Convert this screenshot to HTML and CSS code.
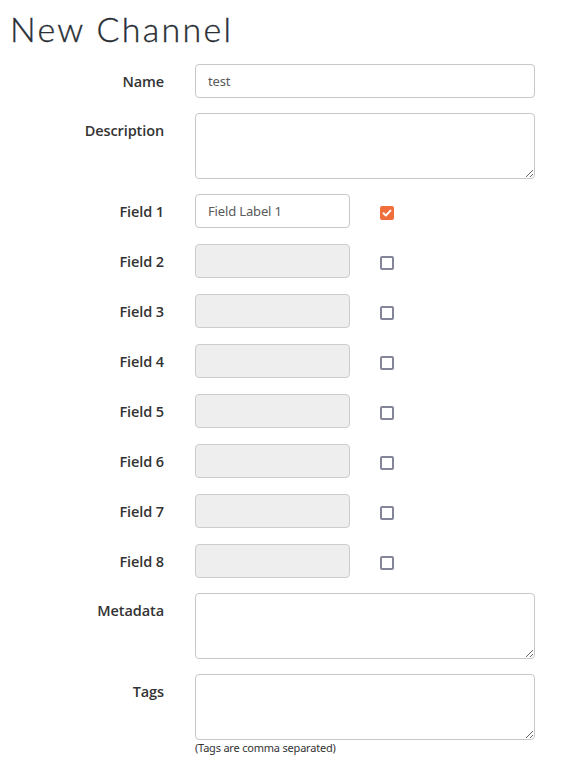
FILE: index.html
```html
<!DOCTYPE html>
<html>
<head>
<meta charset="utf-8">
<link rel="stylesheet" href="styles.css">
</head>
<body>
<div class="page">
  <h1 class="title">New Channel</h1>
  <form class="form">
    <div class="row">
      <label class="label">Name</label>
      <div class="control"><input class="input wide" type="text" value="test"></div>
    </div>
    <div class="row">
      <label class="label top">Description</label>
      <div class="control"><textarea class="area"></textarea></div>
    </div>
    <div class="fields">
      <div class="row">
        <label class="label">Field 1</label>
        <div class="control field"><input class="input narrow" type="text" value="Field Label 1"><span class="check on"><svg viewBox="0 0 14 14" width="14" height="14"><path d="M3.5 7.2 L5.9 9.5 L10.5 4.6" fill="none" stroke="#fff" stroke-width="1.9" stroke-linecap="round" stroke-linejoin="round"/></svg></span></div>
      </div>
      <div class="row">
        <label class="label">Field 2</label>
        <div class="control field"><input class="input narrow off" type="text" disabled><span class="check"></span></div>
      </div>
      <div class="row">
        <label class="label">Field 3</label>
        <div class="control field"><input class="input narrow off" type="text" disabled><span class="check"></span></div>
      </div>
      <div class="row">
        <label class="label">Field 4</label>
        <div class="control field"><input class="input narrow off" type="text" disabled><span class="check"></span></div>
      </div>
      <div class="row">
        <label class="label">Field 5</label>
        <div class="control field"><input class="input narrow off" type="text" disabled><span class="check"></span></div>
      </div>
      <div class="row">
        <label class="label">Field 6</label>
        <div class="control field"><input class="input narrow off" type="text" disabled><span class="check"></span></div>
      </div>
      <div class="row">
        <label class="label">Field 7</label>
        <div class="control field"><input class="input narrow off" type="text" disabled><span class="check"></span></div>
      </div>
      <div class="row">
        <label class="label">Field 8</label>
        <div class="control field"><input class="input narrow off" type="text" disabled><span class="check"></span></div>
      </div>
    </div>
    <div class="row">
      <label class="label top">Metadata</label>
      <div class="control"><textarea class="area"></textarea></div>
    </div>
    <div class="row">
      <label class="label top tags">Tags</label>
      <div class="control">
        <textarea class="area"></textarea>
        <div class="help">(Tags are comma separated)</div>
      </div>
    </div>
  </form>
</div>
</body>
</html>
```

FILE: styles.css
```css
* { box-sizing: border-box; }
html, body { margin: 0; padding: 0; background: #fff; }
body { font-family: "Open Sans", "Noto Sans", sans-serif; color: #333; }
.page { padding: 0 10px; }
.title {
  font-family: Lato, "Open Sans", sans-serif;
  font-weight: 300;
  font-size: 34px;
  line-height: 40px;
  letter-spacing: 2.3px;
  color: #2a2f36;
  margin: 9px 0 15px 0;
  height: 40px;
  -webkit-text-stroke: 0.35px #2a2f36;
}
.form { display: flex; flex-direction: column; gap: 15px; }
.fields { display: flex; flex-direction: column; gap: 16px; }
.row { display: grid; grid-template-columns: 155px 340px; column-gap: 30px; align-items: center; }
.row:has(.area) { align-items: start; }
.label {
  text-align: right;
  font-family: "Open Sans", sans-serif;
  font-weight: 600;
  font-size: 14.5px;
  letter-spacing: -0.1px;
  color: #333;
  padding-right: 1px;
}
.label.top { padding-top: 8px; line-height: 20px; }
.label.tags { padding-top: 8px; }
.control { display: flex; flex-direction: column; }
.control.field { flex-direction: row; align-items: center; gap: 30px; }
.input {
  height: 34px;
  border: 1px solid #c8c8c8;
  border-radius: 4px;
  padding: 0 12px;
  font-family: "Noto Sans", sans-serif;
  font-size: 13px;
  letter-spacing: -0.15px;
  color: #5a5a5a;
  background: #fff;
  outline: none;
}
.input.wide { width: 340px; }
.input.narrow { width: 155px; }
.input.off { background: #eeeeee; border-color: #cccccc; }
.area {
  width: 340px;
  height: 66px;
  border: 1px solid #c8c8c8;
  border-radius: 4px;
  display: block;
  resize: vertical;
  margin: 0;
  font-family: "Noto Sans", sans-serif;
  font-size: 13px;
}
.check {
  width: 14px;
  height: 14px;
  border: 2px solid #85859a;
  border-radius: 2px;
  display: inline-block;
  position: relative;
  margin-top: 4px;
}
.check.on { background: #ef6e3b; border-color: #ef6e3b; }
.check.on svg { position: absolute; left: -2px; top: -2px; }
.help {
  font-family: "Noto Sans", sans-serif;
  font-size: 11px;
  color: #333;
  margin-top: 0px;
  line-height: 15px;
  letter-spacing: -0.2px;
}
```
